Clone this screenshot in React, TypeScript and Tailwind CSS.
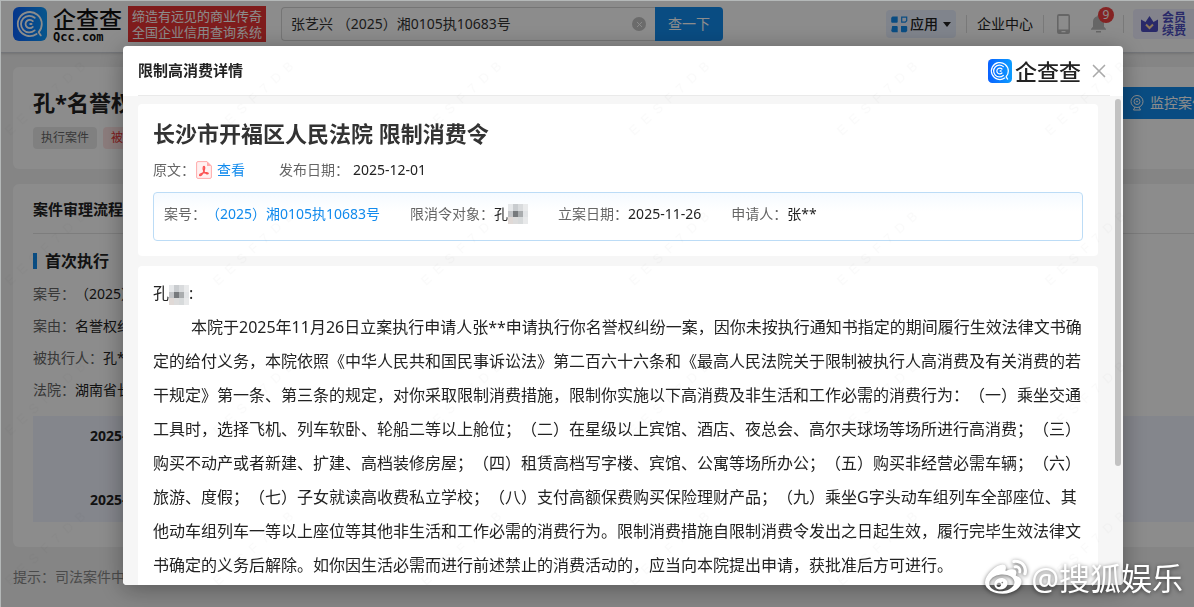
import { useState } from "react";
import { FaWeibo } from "react-icons/fa";
import { X } from "lucide-react";

const caseRows = [
  { label: "案号：", value: "（2025）湘0105执10683号" },
  { label: "案由：", value: "名誉权纠纷" },
  { label: "被执行人：", value: "孔**" },
  { label: "法院：", value: "湖南省长沙市开福区人民法院" },
];

const timeline = ["2025-11-26", "2025-12-01"];

const orderText =
  "本院于2025年11月26日立案执行申请人张**申请执行你名誉权纠纷一案，因你未按执行通知书指定的期间履行生效法律文书确定的给付义务，本院依照《中华人民共和国民事诉讼法》第二百六十六条和《最高人民法院关于限制被执行人高消费及有关消费的若干规定》第一条、第三条的规定，对你采取限制消费措施，限制你实施以下高消费及非生活和工作必需的消费行为：（一）乘坐交通工具时，选择飞机、列车软卧、轮船二等以上舱位；（二）在星级以上宾馆、酒店、夜总会、高尔夫球场等场所进行高消费；（三）购买不动产或者新建、扩建、高档装修房屋；（四）租赁高档写字楼、宾馆、公寓等场所办公；（五）购买非经营必需车辆；（六）旅游、度假；（七）子女就读高收费私立学校；（八）支付高额保费购买保险理财产品；（九）乘坐G字头动车组列车全部座位、其他动车组列车一等以上座位等其他非生活和工作必需的消费行为。限制消费措施自限制消费令发出之日起生效，履行完毕生效法律文书确定的义务后解除。如你因生活必需而进行前述禁止的消费活动的，应当向本院提出申请，获批准后方可进行。";

function LogoMark({ className }: { className?: string }) {
  return (
    <svg viewBox="0 0 34 34" className={className} fill="none" aria-hidden="true">
      <defs>
        <linearGradient id="logoFill" x1="0" y1="0" x2="1" y2="0">
          <stop offset="0" stopColor="#0a62ff" />
          <stop offset="1" stopColor="#0d9dff" />
        </linearGradient>
      </defs>
      <rect width="34" height="34" rx="6" fill="url(#logoFill)" />
      <g stroke="#fff" strokeWidth="1.8" strokeLinecap="round" strokeLinejoin="round">
        <path d="M23.600 26.900A12 12 0 1 1 28.800 17c0 3.200-1.200 6.100-3.100 8.200l2.100 3.200" />
        <path d="M21.700 23.400A8.300 8.300 0 1 1 21.700 10.800" />
        <path d="M19.800 19.900a4.200 4.200 0 1 1 0-5.800" />
        <path d="M18.600 17h-1.400" />
      </g>
    </svg>
  );
}

// pixelated block that hides part of a name
const mosaicCells = [
  "#e6e8ea", "#c9cccf", "#d9dbdd", "#e9eaeb",
  "#c3c5c8", "#777a7d", "#a9acae", "#e2e4e6",
  "#e0d9d6", "#dcdcdc", "#d7dadb", "#e8e9ea",
];

function Mosaic() {
  return (
    <svg width="20" height="20" viewBox="0 0 4 3" preserveAspectRatio="none" shapeRendering="crispEdges" className="inline-block align-middle" aria-hidden="true">
      {mosaicCells.map((fill, i) => (
        <rect key={i} x={i % 4} y={Math.floor(i / 4)} width="1" height="1" fill={fill} />
      ))}
    </svg>
  );
}

function TopBar() {
  const [keyword, setKeyword] = useState("张艺兴 （2025）湘0105执10683号");

  return (
    <header className="flex h-[53px] items-center border-b border-gray-300 bg-white pb-1 pl-[13px] shadow-sm">
      <a href="#" className="flex items-center gap-[6px]">
        <LogoMark className="h-[34px] w-[34px]" />
        <span className="flex flex-col gap-px text-[#111]">
          <span className="text-[23px] leading-[24px] font-medium">企查查</span>
          <span className="font-['DejaVu_Sans_Mono',monospace] text-xs leading-[10px] font-bold">Qcc.com</span>
        </span>
      </a>
      <div className="ml-[6px] bg-[#e83434] px-1 py-[2px] text-[13px] leading-[16px] whitespace-nowrap text-white">
        <p>缔造有远见的商业传奇</p>
        <p>全国企业信用查询系统</p>
      </div>

      <form className="ml-[15px] flex h-[34px]" onSubmit={(e) => e.preventDefault()}>
        <div className="flex w-[374px] items-center rounded-l border border-r-0 border-[#d6d6d6] pr-[9px] pl-[9px]">
          <input
            aria-label="搜索"
            value={keyword}
            onChange={(e) => setKeyword(e.target.value)}
            className="min-w-0 flex-1 bg-transparent text-sm text-[#333] outline-none"
          />
          <button type="button" aria-label="清空" onClick={() => setKeyword("")} className="flex h-[14px] w-[14px] items-center justify-center rounded-full bg-[#c4c4c4] text-white">
            <X size={9} strokeWidth={2.5} />
          </button>
        </div>
        <button type="submit" className="w-[68px] rounded-r-sm bg-[#128bed] text-sm text-white">查一下</button>
      </form>

      <nav className="ml-auto flex items-center text-sm whitespace-nowrap text-[#222]">
        <button type="button" className="flex h-[28px] items-center rounded bg-[#e9f0ff] px-[5px] font-medium">
          <svg width="17" height="17" viewBox="0 0 17 17" className="mr-[2px]" aria-hidden="true">
            <g fill="#128bed">
              <path d="M1.5 0.5h5.2v5.2a1 1 0 0 1-1 1H1.2a1 1 0 0 1-1-1V1.8z" />
              <path d="M1.2 10h4.5a1 1 0 0 1 1 1v5.2H1.5L.2 15z" />
              <path d="M10 10h5.2a1 1 0 0 1 1 1v4l-1.3 1.3H11a1 1 0 0 1-1-1z" />
            </g>
            <path d="M10.7 1.2h5v3.6l-1.4 1.3h-3.6z" fill="none" stroke="#128bed" strokeWidth="1.2" />
          </svg>
          应用
          <svg width="8" height="5" viewBox="0 0 8 5" className="ml-[5px]" aria-hidden="true">
            <path d="M0 0h8L4 5z" fill="#222" />
          </svg>
        </button>
        <span className="mx-[10px] h-[18px] w-px bg-[#ddd]" />
        <a href="#">企业中心</a>
        <span className="mx-[10px] h-[18px] w-px bg-[#ddd]" />
        <button type="button" aria-label="手机版" className="ml-[3px]">
          <svg width="13" height="20" viewBox="0 0 13 20" aria-hidden="true">
            <path fillRule="evenodd" fill="#bbb" d="M2 0h9a2 2 0 0 1 2 2v16a2 2 0 0 1-2 2H2a2 2 0 0 1-2-2V2a2 2 0 0 1 2-2zm-.4 2v13.6h9.8V2zM4.5 17v1.2h4V17z" />
          </svg>
        </button>
        <button type="button" aria-label="消息" className="relative mr-[7px] ml-[20px]">
          <svg width="17" height="18" viewBox="0 0 17 18" fill="#bbb" aria-hidden="true">
            <path d="M8.5 0c.8 0 1.2.5 1.2 1.3 2.8.6 4.3 2.8 4.3 5.4v5l2 2.2v.9H1v-.9l2-2.2v-5c0-2.6 1.5-4.8 4.3-5.4C7.300.5 7.700 0 8.500 0zM6 16h5v1.600H6z" />
          </svg>
          <span className="absolute -top-2 left-2 flex h-4 w-4 items-center justify-center rounded-full bg-[#f04040] text-xs text-white">9</span>
        </button>
        <span className="mx-[9px] h-[18px] w-px bg-[#ddd]" />
        <a href="#" className="flex h-[30px] items-center gap-1 rounded-l bg-[#eeefff] px-2 text-xs leading-[13px] font-bold text-[#4b4cc0]">
          <svg width="17" height="17" viewBox="0 0 17 17" aria-hidden="true">
            <path d="M0 3.500 4.500 6 8.500 0l4 6L17 3.500V14a2 2 0 0 1-2 2H2a2 2 0 0 1-2-2z" fill="#4b4cc0" />
            <path d="m5 8.500 3.500 3.500L12 8.500" fill="none" stroke="#ffd9a0" strokeWidth="2" />
          </svg>
          <span className="w-6 whitespace-normal">会员续费</span>
        </a>
      </nav>
    </header>
  );
}

function CasePage() {
  return (
    <main className="overflow-hidden pt-[14px] pl-[13px] text-sm whitespace-nowrap text-[#222]">
      <section className="flex h-[102px] items-start justify-between rounded-l-md bg-white pt-5 pl-5">
        <div>
          <h1 className="text-[22px] leading-[30px] font-bold">孔*名誉权纠纷</h1>
          <div className="mt-[10px] flex gap-[6px] text-xs leading-[22px]">
            <span className="rounded-sm bg-[#eaeaea] px-2 text-[#666]">执行案件</span>
            <span className="rounded-sm bg-[#ffe4e4] px-2 text-[#e83434]">被执行人</span>
          </div>
        </div>
        <button type="button" className="flex h-8 w-[74px] items-center gap-[6px] overflow-hidden bg-[#128bed] pl-[10px] text-white">
          <svg width="14" height="16" viewBox="0 0 14 16" fill="none" stroke="#fff" className="shrink-0" aria-hidden="true">
            <circle cx="7" cy="6.500" r="6" />
            <circle cx="7" cy="6.500" r="3" />
            <circle cx="7" cy="6.500" r=".6" />
            <path d="M5 12 3.500 15h7L9 12" />
          </svg>
          监控案件
        </button>
      </section>

      <section className="mt-[15px] rounded-l-md bg-white pb-[25px] pl-5">
        <h2 className="border-b border-[#e4e4e4] pt-[13px] pb-3 text-[15px] leading-6 font-bold">案件审理流程</h2>
        <h3 className="mt-4 mb-[6px] flex items-center gap-2 text-base leading-[22px] font-bold">
          <span className="h-4 w-1 bg-[#128bed]" />
          首次执行
        </h3>
        <dl className="leading-8">
          {caseRows.map((row) => (
            <div key={row.label} className="flex">
              <dt className="text-[#666]">{row.label}</dt>
              <dd>{row.value}</dd>
            </div>
          ))}
        </dl>
        <ol className="mt-[10px] flex h-[106px] flex-col justify-between bg-[#f1f4ff] pt-[10px] pb-3 pl-[57px] font-bold leading-5">
          {timeline.map((date) => (
            <li key={date}>{date}</li>
          ))}
        </ol>
      </section>
      <p className="mt-5 text-[#888]">提示：司法案件中的信息仅供参考</p>
    </main>
  );
}

function Field({ label, children }: { label: string; children: React.ReactNode }) {
  return (
    <div className="flex items-center">
      <span className="text-[#666]">{label}</span>
      {children}
    </div>
  );
}

function OrderDialog() {
  return (
    <div role="dialog" aria-label="限制高消费详情" className="flex h-full flex-col overflow-hidden rounded-sm bg-white text-[#222] shadow-[0_4px_24px_rgba(0,0,0,0.35)]">
      <div className="mr-[13px] ml-[15px] flex h-[50px] shrink-0 items-center border-b border-[#eaeaea]">
        <h2 className="text-[15px] font-bold">限制高消费详情</h2>
        <div className="ml-auto flex items-center gap-[3px]">
          <LogoMark className="h-6 w-6" />
          <span className="text-[22px] leading-7 font-medium text-[#222]">企查查</span>
        </div>
        <button type="button" aria-label="关闭" className="ml-[7px] text-[#aaa]">
          <X size={22} strokeWidth={1.8} />
        </button>
      </div>

      <div className="relative min-h-0 flex-1 overflow-hidden bg-[#f6f6f6] pt-2 pr-[25px] pl-[15px]">
        <section className="rounded bg-white px-[15px] pt-[14px] pb-[15px] text-sm">
          <h1 className="text-[22px] leading-[30px] font-bold text-[#333]">长沙市开福区人民法院 限制消费令</h1>
          <div className="mt-[11px] flex h-[22px] items-center gap-[34px]">
            <Field label="原文：">
              <svg width="16" height="18" viewBox="0 0 16 18" fill="none" className="ml-px" aria-hidden="true">
                <path d="M2 .6h9l4.400 4.400v11a1.400 1.400 0 0 1-1.400 1.400H2A1.400 1.400 0 0 1 .6 16V2A1.400 1.400 0 0 1 2 .6z" fill="#fff0f0" stroke="#ffaaaa" />
                <path d="M11 .6V5h4.400z" fill="#ffaaaa" />
                <path d="M8 5.500c1 0 .8 2.500 0 4.500-.9 2-2.500 4.600-3.800 4.600-1.600-.3.300-2.200 3-2.800 2.200-.5 5.300-.3 5 .8-.4 1-3-.1-4.400-2.600C6.800 8 7 5.500 8 5.500z" stroke="#fb5353" strokeWidth="1.300" />
              </svg>
              <a href="#" className="ml-[5px] text-[#128bed]">查看</a>
            </Field>
            <Field label="发布日期：">
              <span className="ml-1">2025-12-01</span>
            </Field>
          </div>
          <div className="mt-[11px] flex min-h-[49px] flex-wrap items-start gap-x-[30px] rounded border border-[#bcdcf6] bg-linear-to-b from-[#f5faff] to-white to-40% px-[10px] pt-[10px] leading-[22px]">
            <Field label="案号：">
              <a href="#" className="text-[#128bed]">（2025）湘0105执10683号</a>
            </Field>
            <Field label="限消令对象：">孔<Mosaic /></Field>
            <Field label="立案日期：">2025-11-26</Field>
            <Field label="申请人：">张**</Field>
          </div>
        </section>

        <section className="mt-[10px] rounded bg-white px-[15px] pt-[10px] pb-12 text-base leading-[34px] text-[#222]">
          <p>孔<Mosaic />:</p>
          <p className="indent-[38px]">{orderText}</p>
        </section>

        <div className="absolute top-[3px] right-[2px] h-3/4 w-[6px] rounded-full bg-[#c2c2c2]" />
      </div>
    </div>
  );
}

function Watermark() {
  return (
    <svg className="pointer-events-none fixed inset-0 h-full w-full" aria-hidden="true">
      <defs>
        <pattern id="mark" width="208" height="150" patternUnits="userSpaceOnUse">
          <text x="10" y="136" transform="rotate(-42 10 136)" fontSize="13" fill="#000" fillOpacity="0.02" fontFamily="Liberation Sans, sans-serif">
            {"E E S F 7 D B".replaceAll(" ", "\u00a0\u00a0")}
          </text>
        </pattern>
      </defs>
      <rect width="100%" height="100%" fill="url(#mark)" />
    </svg>
  );
}

export default function App() {
  return (
    <div lang="zh-CN" className="h-screen overflow-hidden bg-[#f2f2f2] font-['Noto_Sans','Noto_Sans_CJK_SC',sans-serif] [text-spacing-trim:space-all]">
      <TopBar />
      <CasePage />
      <div className="fixed inset-0 border-t border-l border-[#b4b8b8] bg-black/45 pt-[45px] pr-[71px] pb-[22px] pl-[122px]">
        <OrderDialog />
      </div>
      <Watermark />
      <div className="fixed right-[11px] bottom-2 flex items-center gap-1 text-white drop-shadow-[0_1px_2px_rgba(0,0,0,0.6)]">
        <FaWeibo size={42} aria-hidden="true" />
        <span className="text-[31px] leading-10">@搜狐娱乐</span>
      </div>
    </div>
  );
}
